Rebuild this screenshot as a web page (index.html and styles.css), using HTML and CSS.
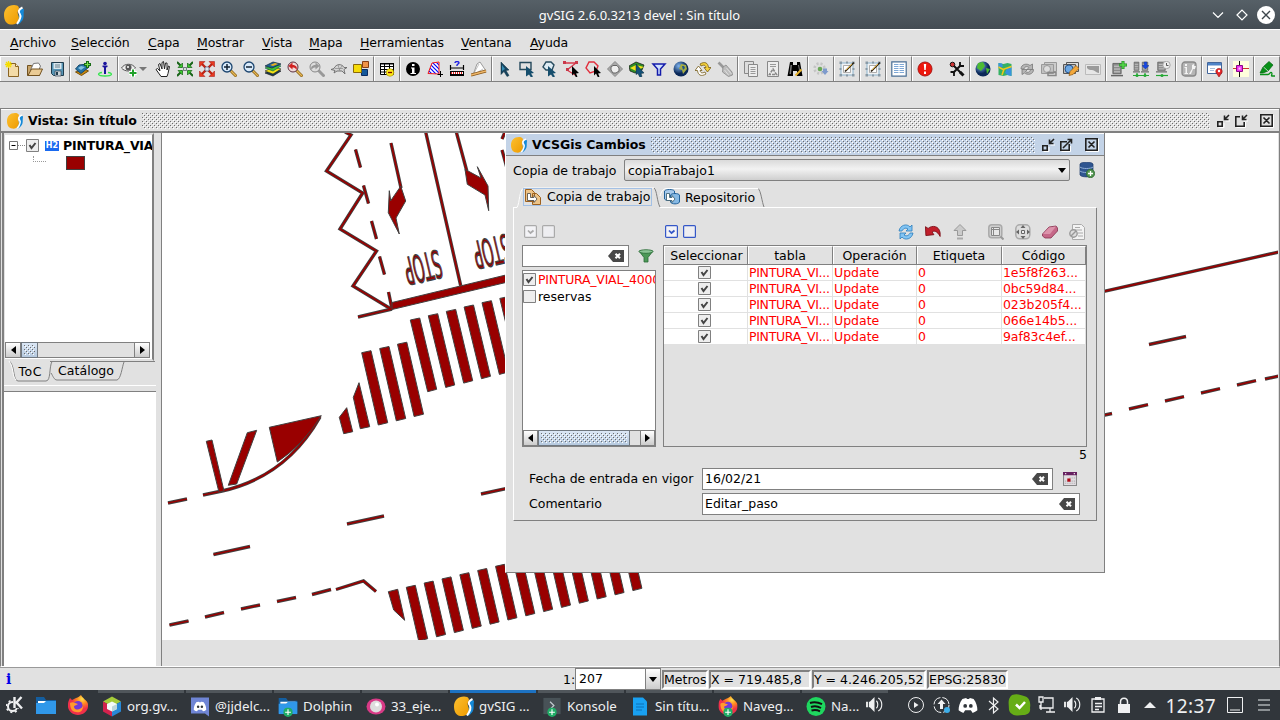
FILE: index.html
```html
<!DOCTYPE html>
<html lang="es">
<head>
<meta charset="utf-8">
<title>gvSIG 2.6.0.3213 devel : Sin título</title>
<link rel="stylesheet" href="styles.css">
</head>
<body>
<svg class="defs" width="0" height="0">
<defs>
<pattern id="dots" width="4" height="4" patternUnits="userSpaceOnUse"><path fill="#6c6c6c" d="M0 0h1v1H0zM2 2h1v1H2z"/><path fill="#fff" d="M1 1h1v1H1zM3 3h1v1H3z"/></pattern>
<pattern id="hatch" width="4" height="4" patternUnits="userSpaceOnUse"><path fill="#fff" d="M0 0h4v4H0z"/><path stroke="#00f" stroke-width="1.200" d="M-1-1l6 6M3-1l2 2M-1 3l2 2"/></pattern>
<linearGradient id="gold" x2="1" y2="1"><stop stop-color="#fcc030"/><stop offset="1" stop-color="#ee9b00"/></linearGradient>
<radialGradient id="globeg" cx=".35" cy=".3"><stop stop-color="#7fb4ee"/><stop offset="1" stop-color="#0b2858"/></radialGradient>
<radialGradient id="fox" cx=".7" cy=".2"><stop stop-color="#ffe14a"/><stop offset=".5" stop-color="#ff8a20"/><stop offset="1" stop-color="#f0304a"/></radialGradient>
<symbol id="logo" viewBox="0 0 20 20"><path fill="#1489d8" d="M16 4c2 0 4-1 4 1-1 5 1 8-3 12-2 2.500-4 3-4 1z"/><path fill="url(#gold)" d="M10 0c5 0 6 3 4 6-1.500 3 2 5 .5 9-1 4-5 5-8 4.500C2 19 0 15 0 10 0 4 4 0 10 0z"/><path fill="none" stroke="#fff" stroke-width="2" d="M18.500 2.500c-4 2-4.500 4-2.700 6.500s0 6-2.800 10"/></symbol>
<symbol id="new" viewBox="0 0 16 16"><path fill="#f3dba7" stroke="#8a6424" d="M3.500 2.500h7l3 3v10h-10z"/><path fill="#fff3cf" stroke="#8a6424" d="M10.500 2.500v3h3"/><path stroke="#f5dd00" stroke-width="1.300" d="M3.500 0v7M0 3.500h7M1 1l5 5M6 1L1 6"/></symbol>
<symbol id="open" viewBox="0 0 16 16"><path fill="#c7a46a" stroke="#725220" d="M.5 14.500v-10h4l1 2h7v8z"/><path fill="#fff" stroke="#777" d="M3.500 9l3-6.500 5-.5 2 3-2 5z"/><path fill="#eacb95" stroke="#725220" d="M1 14.500L4.500 8h11l-3 6.500z"/></symbol>
<symbol id="save" viewBox="0 0 16 16"><path fill="#5795b5" stroke="#203c4d" d="M2.500 1.500h12v13h-10l-2-2z"/><path fill="#d9e7ee" d="M4.500 2h8v6h-8z"/><path fill="#cfd8dc" stroke="#345" stroke-width=".7" d="M6 10h6v5H6z"/><path fill="#203c4d" d="M7 11h2v3H7z"/><path stroke="#68808c" d="M6 4h5M6 6h5"/></symbol>
<symbol id="addlayer" viewBox="0 0 16 16"><path fill="#c7850a" stroke="#76500a" d="M.5 11l9-3 4 2-7 4.500z"/><path fill="#2372a6" stroke="#1a4a6a" d="M.5 8L4 4l9-1 1 3-8 6.500z"/><path fill="#83c0df" d="M3 7l3-2 4 1-4 3z"/><path stroke="#186c16" stroke-width="3" d="M12.500 0v7M9 3.500h7"/><path stroke="#7be04d" d="M12.500 1v5M10 3.500h5"/></symbol>
<symbol id="person" viewBox="0 0 16 16"><path fill="none" stroke="#36e64f" stroke-width="1.400" d="M5 11.500c-5 .5-5 3.500 3 3.500s8-3 3-3.500"/><circle cx="8" cy="2.500" r="1.800" fill="#1a139c"/><path fill="#1a139c" d="M5.500 4.500h5V6l-1.500.5V13H7V6.500L5.500 6z"/></symbol>
<symbol id="eye" viewBox="0 0 16 16"><path fill="#eee" stroke="#555" d="M.5 7c3-5 11-5 14 0-3 4-11 4-14 0z"/><circle cx="7.500" cy="6.500" r="3" fill="#555"/><circle cx="7" cy="6" r="1" fill="#fff"/><path stroke="#fff" stroke-width="4" d="M12 8v8M8 12h8"/><path stroke="#21a12b" stroke-width="2" d="M12 8.500v7M8.500 12h7"/></symbol>
<symbol id="hand" viewBox="0 0 16 16"><path fill="#fff" stroke="#222" d="M5 14L1 8.500 2.500 7.500 5 10 3.500 3.500l1.500-1L7 8V1.500l1.500-1L9.500 8l1-6 1.500 0v7l1.500-4 1 .5-1.500 7-1 3H6z"/></symbol>
<symbol id="zin" viewBox="0 0 16 16"><path stroke="#91681c" stroke-width="3" d="M9 9l6.500 6.500"/><path stroke="#e7b955" stroke-width="1.200" d="M9 9l6 6"/><circle cx="6" cy="6" r="5" fill="#d9eafa" stroke="#1d4670" stroke-width="1.300"/><path stroke="#123" stroke-width="1.500" d="M6 3v6M3 6h6"/></symbol>
<symbol id="zout" viewBox="0 0 16 16"><path stroke="#91681c" stroke-width="3" d="M9 9l6.500 6.500"/><path stroke="#e7b955" stroke-width="1.200" d="M9 9l6 6"/><circle cx="6" cy="6" r="5" fill="#d9eafa" stroke="#1d4670" stroke-width="1.300"/><path stroke="#123" stroke-width="1.500" d="M3 6h6"/></symbol>
<symbol id="zprev" viewBox="0 0 16 16"><path stroke="#91681c" stroke-width="3" d="M9 9l6.500 6.500"/><path stroke="#e7b955" stroke-width="1.200" d="M9 9l6 6"/><circle cx="6" cy="6" r="5" fill="#f0d8d8" stroke="#5b3040"/><path fill="#d02020" d="M1.500 5l4-3.500V4c4 0 5 2.500 4 5-1-2-2-2.500-4-2.500v2z"/></symbol>
<symbol id="znext" viewBox="0 0 16 16"><path stroke="#999" stroke-width="3" d="M9 9l6.500 6.500"/><circle cx="6" cy="6" r="5" fill="#ddd" stroke="#888"/><path fill="#999" d="M10.500 5l-4-3.500V4c-4 0-5 2.500-4 5 1-2 2-2.500 4-2.500v2z"/></symbol>
<symbol id="arrin" viewBox="0 0 16 16"><path stroke="#176317" stroke-width="2" d="M0 1l5 5M16 1l-5 5M0 15l5-5M16 15l-5-5"/><path fill="#3ecc30" stroke="#176317" stroke-width=".7" d="M5.500 2v4.500H1zM10.500 2v4.500H15zM5.500 14V9.500H1zM10.500 14V9.500H15z"/><path fill="#ccebd0" stroke="#334" stroke-width=".6" d="M6.500 6.500h3v3h-3z"/></symbol>
<symbol id="arrout" viewBox="0 0 16 16"><path stroke="#c02414" stroke-width="2.400" d="M2 2l12 12M14 2L2 14"/><path fill="#e83a20" stroke="#a01010" stroke-width=".5" d="M.5.5H6L.5 6zM15.500.5H10L15.500 6zM.5 15.500H6L.5 10zM15.500 15.500H10l5.500-5.500z"/><path fill="#dde9f2" stroke="#446" stroke-width=".6" d="M6 6h4v4H6z"/></symbol>
<symbol id="layers" viewBox="0 0 16 16"><path fill="#193b55" stroke="#111" stroke-width=".6" d="M0 12l9-4 7 2-8 5z"/><path fill="#f2e216" stroke="#222" stroke-width=".6" d="M0 10l9-4 7 2-8 5z"/><path fill="#3fc037" stroke="#154" stroke-width=".6" d="M0 7l9-4 7 2-8 5z"/><path fill="#1c6196" stroke="#123" stroke-width=".7" d="M0 5l8-4 8 2-9 4z"/><path fill="#edb020" d="M5 4l5-2 3 1-5 2z"/></symbol>
<symbol id="turtle" viewBox="0 0 16 16"><path fill="#d4d4d4" stroke="#6a6a6a" stroke-width=".9" d="M0 8.500l3-1c2-5 8-5 10-1h3l-3 2 1 4.500-3-3H6l-3 2 1-2.500z"/><path fill="none" stroke="#888" stroke-width=".7" d="M4 7.500h8M7 4l2 6M11 5L8 9"/></symbol>
<symbol id="squares" viewBox="0 0 16 16"><path fill="#16599b" stroke="#0b2c62" d="M8.500 8.500h6v6h-6z"/><path fill="#f6dc09" stroke="#8a6909" d="M.5 3.500h8v8h-8z"/><path fill="#f09348" stroke="#863e14" d="M9.500.5h6v6h-6z"/></symbol>
<symbol id="table" viewBox="0 0 16 16"><path fill="#fff" stroke="#000" stroke-width="1" d="M1.500 2.500h13v11h-13zM1.500 5.500h13M1.500 8.500h13M1.500 11h13M5.500 3v10M10.500 3v10"/><path d="M1 2h14v1.500H1z"/><circle cx="11" cy="11.500" r="3.800" fill="#ffe819" stroke="#a18f00" stroke-width=".6"/><path stroke="#7d0900" stroke-width="1.300" d="M9 11.500h4"/></symbol>
<symbol id="info" viewBox="0 0 16 16"><circle cx="8" cy="8" r="7"/><path fill="#fff" d="M7 3h2.500v2H7zM6 6.500h3.500V12H11v1H5.500v-1H7V7.500H6z"/></symbol>
<symbol id="area" viewBox="0 0 16 16"><path fill="url(#hatch)" stroke="#f01b1b" d="M1 12.500L5 2l7-1v12z"/><path stroke="#000" d="M13.500 10v6M10.500 13.500h6"/></symbol>
<symbol id="ruler" viewBox="0 0 16 16"><path stroke="#000" stroke-width="1.200" d="M1.500 4v5M14.500 4v5M2 7h12"/><path d="M1 10h14v5H1z"/><path fill="#fff" d="M2 11h12v2H2z"/><path stroke="#e02020" stroke-width="2" stroke-dasharray="1" d="M2 12h12"/><path fill="none" stroke="#2020e0" stroke-width="1.400" d="M6 2c0-2 4-2 4 0L8 4v1"/></symbol>
<symbol id="fan" viewBox="0 0 16 16"><path fill="#fff" stroke="#777" stroke-width=".7" d="M2 14L6 3l3-2 6 9z"/><path stroke="#999" stroke-width=".6" d="M2 14L8 3M2 14l10-6"/><path stroke="#8a5719" stroke-width="3" d="M0 14l15-4"/><path stroke="#efb86b" stroke-width="1.600" d="M0 14l15-4"/></symbol>
<symbol id="cursor" viewBox="0 0 16 16"><path fill="#17435e" stroke="#0b3043" stroke-width=".5" d="M4 1l8 8-3 .5 3 5-2 1-3-5-3 3z"/><path fill="#358db5" d="M5 4l3 4-3 2z"/></symbol>
<symbol id="selrect" viewBox="0 0 16 16"><path fill="none" stroke="#25495c" stroke-width="1.400" d="M1 1.500h11v7H1z"/><path fill="#164e6d" d="M7 5l8 7-3 .5 2 3-2 1-2-3-3 2z"/></symbol>
<symbol id="selpoly" viewBox="0 0 16 16"><path fill="#ddebf3" stroke="#25495c" stroke-width="1.400" d="M5 1h5l3 3-2 5H5L2 6z"/><path fill="#164e6d" d="M7 5l8 7-3 .5 2 3-2 1-2-3-3 2z"/></symbol>
<symbol id="selline" viewBox="0 0 16 16"><path fill="none" stroke="#d8384a" stroke-width="1.300" d="M1 2h12L4 9l8 5"/><path fill="#c9394a" d="M0 0h3v3H0zM12 0h3v3h-3zM3 7h3v3H3z"/><path d="M9 5l7 7-3 .5 1.500 3-1.500 1-2-4-2 2z"/></symbol>
<symbol id="selcirc" viewBox="0 0 16 16"><path fill="none" stroke="#e12e3c" stroke-width="1.400" d="M4 1h5l4 4-2 5-6 2-4-5z"/><path d="M9 5l7 7-3 .5 1.500 3-1.500 1-2-4-2 2z"/></symbol>
<symbol id="buffer" viewBox="0 0 16 16"><path fill="#a9a9a9" stroke="#888" d="M8 .5l3 3 4.500 4.500-4.500 4.500-3 3-3-3L.5 8 5 3.500z"/><path fill="#eee" stroke="#666" d="M6 4.500h4L12 7v3l-3 2H6L4 9V6z"/></symbol>
<symbol id="sellayer" viewBox="0 0 16 16"><path fill="#2f8d27" stroke="#111" stroke-width=".7" d="M0 5l7-4 8 3-2 5-7 3-5-2z"/><path fill="#f0e31f" d="M1 7l6-3 8 2-8 4z"/><path fill="#145178" stroke="#092838" stroke-width=".5" d="M7 3l8 9-3 .5 1 3-2 1-2-4-2 1z"/></symbol>
<symbol id="filter" viewBox="0 0 16 16"><path fill="#cfe0ff" stroke="#141baa" stroke-width="1.500" d="M2 3h12L9.500 8v6h-3V8z"/></symbol>
<symbol id="globe" viewBox="0 0 16 16"><circle cx="8" cy="8" r="7.500" fill="url(#globeg)"/><path fill="#a6ad44" d="M8 3l5 1 1 4-4 5-1-4-3-1z"/><path fill="#21558a" d="M9 5l2 0 1 2-2 2z"/></symbol>
<symbol id="swap" viewBox="0 0 16 16"><g fill="#f4d13d" stroke="#755b17" stroke-width=".8"><path d="M5 3c5-3 8-1 8.500 3.500H16L12.500 11 9 6.500h2C10.500 4 9 3.500 6 5z"/><path fill="#fff" d="M11 13c-5 3-8 1-8.500-3.500H0L3.500 5 7 9.500H5C5.500 12 7 12.500 10 11z"/></g></symbol>
<symbol id="broom" viewBox="0 0 16 16"><path stroke="#999" stroke-width="2.600" d="M1.500 1.500l6 6"/><path fill="#bdbdbd" stroke="#888" stroke-width=".8" d="M6 6l3-2 6 7 .5 3-4 1.500-6-4.500z"/><path stroke="#ddd" d="M7.500 9l4 5M9.500 7l5 6"/></symbol>
<symbol id="copies" viewBox="0 0 16 16"><path fill="#ddd" stroke="#888" d="M1.500.5h9v12h-9z"/><path fill="#ededed" stroke="#888" d="M5.500 3.500h9v12h-9z"/><path stroke="#999" d="M7.500 6.500h5M7.500 8.500h5M7.500 10.500h5M7.500 12.500h5"/></symbol>
<symbol id="recycle" viewBox="0 0 16 16"><path fill="#ededed" stroke="#888" d="M2.500.5h11v15h-11z"/><path stroke="#999" fill="none" d="M5 3.500h6M5 5.500h6"/><path stroke="#888" stroke-width="1.600" stroke-dasharray="3 1" fill="none" d="M8 8l3.500 5.500h-7z"/></symbol>
<symbol id="binoc" viewBox="0 0 16 16"><path d="M3 1h3v3h4V1h3l2.500 14H10v-5H6v5H.5z"/><path fill="#777" d="M3.500 4H5l-1 9H2.500zM11 4h1l1 5h-1z"/><path stroke="#e8b42f" stroke-width="2" d="M8.500 14.500l6-6"/></symbol>
<symbol id="gear" viewBox="0 0 16 16"><circle cx="6.500" cy="7.500" r="5" fill="#ddd" stroke="#c4c4c4" stroke-width="2.500" stroke-dasharray="2"/><circle cx="7" cy="8" r="2.300" fill="#6aa858"/><path fill="#7e9bcc" d="M10 7.500h4v2.500h1.500L12 14 8.500 10H10z"/></symbol>
<symbol id="edit" viewBox="0 0 16 16"><path fill="#f2f2f2" stroke="#8bb4cf" d="M2 2h12v12H2z"/><path fill="#fff" stroke="#999" stroke-width=".8" d="M4.500 4.500h7v7h-7z"/><g fill="#8a9aa5"><path d="M.5.500h2.500v2.500H.5zM7 .5h2v2H7zM13 .5h2.500v2.500H13zM.5 7h2v2h-2zM13.500 7h2v2h-2zM.5 13h2.500v2.500H.5zM7 13.500h2v2H7zM13 13h2.500v2.500H13z"/></g><path stroke="#302719" stroke-width="1.700" d="M6 10.500l9-9"/><path stroke="#d9a633" stroke-width="1" d="M7 9l6-6"/></symbol>
<symbol id="list" viewBox="0 0 16 16"><path fill="#fff" stroke="#4a6f95" stroke-width="1.200" d="M.8.800h14.400v14.400H.8z"/><path stroke="#7fa8d6" d="M3 3.500h4.500M8.500 3.500H13M3 5.500h4.500M8.500 5.500H13M3 7.500h4.500M8.500 7.500H13M3 9.500h4.500M8.500 9.500H13M3 11.500h4.500M8.500 11.500H13"/></symbol>
<symbol id="alert" viewBox="0 0 16 16"><circle cx="8" cy="8" r="7" fill="#ed170d" stroke="#a91714"/><path fill="#fff" d="M6.800 3h2.400l-.5 6H7.300zM7 10.500h2v2.500H7z"/></symbol>
<symbol id="tools" viewBox="0 0 16 16"><path stroke="#111" stroke-width="2" d="M3 3l10 10M12 4L4 12"/><path fill="none" stroke="#111" stroke-width="1.800" d="M11 1v4h4M1.500 11H5v4"/><path stroke="#111" stroke-width="3" d="M11 11l3.500 3.500"/><circle cx="3.500" cy="3.500" r="2.300" fill="#c33" stroke="#111"/></symbol>
<symbol id="earth" viewBox="0 0 16 16"><circle cx="8" cy="8" r="7.500" fill="url(#globeg)"/><path fill="#4dbb33" d="M3 2l5-1 2 4-4 5-4-3zM11 7l4 1-3 5z"/></symbol>
<symbol id="map" viewBox="0 0 16 16"><path fill="#36b164" d="M1.500 2l5 1 4-1 4 1v12l-4-1-4 1-5-1z"/><path fill="#3794dc" d="M10 7l4.500-1v9l-4-1L8 12zM1.500 2l3.500.5 1 3-4.500 2z"/><path fill="none" stroke="#f3c81c" stroke-width="1.500" d="M1.500 6L6 8.500l8.500-3M7 8l-2 6"/></symbol>
<symbol id="sync" viewBox="0 0 16 16"><g fill="#b5b5b5" stroke="#777" stroke-width=".8"><path d="M2 8c0-5 6-6 9-3.500L13.500 3v5.500H8L10 6.500C8 5 5.500 5.500 5 8z"/><path d="M14.500 8.500c0 5-6 6-9 3.500L3 13.500V8.500h5.500L6.500 10.500c2 1.500 4.500 1 5-2z"/></g></symbol>
<symbol id="viewgray" viewBox="0 0 16 16"><path fill="#ccc" stroke="#999" d="M3.500 1.500h12v9h-12z"/><path fill="#c2c2c2" stroke="#999" d="M.5 3.500h12v9H.5z"/><circle cx="6" cy="8" r="3.500" fill="#ddd" stroke="#999"/><path fill="none" stroke="#888" stroke-width="1.500" d="M7 11.500h8v3H7z"/></symbol>
<symbol id="viewedit" viewBox="0 0 16 16"><path fill="#ddd" stroke="#555" d="M3.500 1.500h12v9h-12z"/><path fill="#bbb" stroke="#555" d="M.5 3.500h12v9H.5z"/><circle cx="6" cy="8" r="4" fill="#6ca8e5" stroke="#27568f"/><path fill="#f3a83b" stroke="#8e580f" stroke-width=".7" d="M6 14.500l1-4 6-6 3 3-6 6z"/></symbol>
<symbol id="image" viewBox="0 0 16 16"><path fill="#e6e6e6" stroke="#bbb" d="M.5 3.500h15v10H.5z"/><path fill="#9a9a9a" d="M2 5h12v7c-3 0-4-3-7-3-2 0-3 0-5-2z"/></symbol>
<symbol id="server" viewBox="0 0 16 16" preserveAspectRatio="none"><path fill="#8c8c8c" stroke="#5c5c5c" d="M2.500 1.500h11v11h-11z"/><path stroke="#d8d8d8" d="M4 4.500h8M4 7.500h8M4 10.500h8"/><path stroke="#666" stroke-width="1.600" d="M0 14.500h16"/></symbol>
<symbol id="plus" viewBox="0 0 8 8"><path stroke="#238722" stroke-width="3" d="M4 0v8M0 4h8"/><path stroke="#55d94a" stroke-width="1.500" d="M4 .5v7M.5 4h7"/></symbol>
<symbol id="downarr" viewBox="0 0 8 8"><path fill="#1646e8" stroke="#143a9c" stroke-width=".6" d="M2.500 0h3v4H8L4 8 0 4h2.500z"/></symbol>
<symbol id="infogray" viewBox="0 0 16 16"><rect x="1" y="1" width="14" height="14" rx="3" fill="#b5b5b5" stroke="#888" stroke-width="1.300"/><path fill="#f4f4f4" d="M4 3h2v2H4zM3.500 6H6v6h1v1H3.500v-1h1V7h-1zM8 13l3-5V4l2-1v2h2l-1 3h-2l-2 5z"/></symbol>
<symbol id="winpin" viewBox="0 0 16 16"><path fill="#fff" stroke="#44669a" d="M.5 1.500h14v11H.5z"/><path fill="#4e83c7" d="M1 2h13v2.500H1z"/><path stroke="#a8bfdc" d="M3 7.500h5M3 9.500h4"/><path fill="#e52629" stroke="#8f1010" stroke-width=".6" d="M12 16L9 11.500c-1.500-5.500 7.500-5.500 6 0z"/><circle cx="12" cy="10" r="1.200" fill="#fff"/></symbol>
<symbol id="snap" viewBox="0 0 16 16"><path fill="#ffffdc" d="M0 0h16v16H0z"/><path stroke="#111" d="M6.500 0v16"/><path stroke="#c33" d="M0 7.500h16"/><path fill="#ee32ed" stroke="#8c078b" d="M3.500 4.500h6v6h-6z"/><path fill="#ffc8ff" d="M5.500 6.500h2v2h-2z"/></symbol>
<symbol id="marker" viewBox="0 0 16 16"><path fill="#079017" stroke="#056010" stroke-width=".7" d="M1 12l3-6 6-5.500L14 4l-5 6-5 2z"/><path stroke="#e1e1e1" stroke-width=".8" d="M4.500 6l4.500 4"/><path fill="none" stroke="#079017" stroke-width="1.300" d="M1 13.500h8c2 0 2-3 3.500-2s-1 3.500.5 3.500h3"/></symbol>
<symbol id="min" viewBox="0 0 14 14"><path fill="none" stroke="#fff" d="M2.500 13.500h5.500V9M9.500 7H14"/><path fill="none" stroke="#222" stroke-width="1.600" d="M1.800 7.800h4.400v4.400H1.800zM13 1L8.500 5.500M8.500 1.500v4h4"/></symbol>
<symbol id="max" viewBox="0 0 14 14"><path fill="none" stroke="#fff" d="M2.500 13.500h9V8M10 7h4"/><path fill="none" stroke="#222" stroke-width="1.600" d="M6 2.800H1.800v9.400h8.400V8M13 1L8.500 5.500M8.500 1.500v4h4"/></symbol>
<symbol id="max2" viewBox="0 0 14 14"><path fill="none" stroke="#fff" d="M2.500 13.500h9V8"/><path fill="none" stroke="#222" stroke-width="1.600" d="M8 3.800H1.800v8.400h8.400V6M4 10l8-8M8.500 1.500h4v4"/></symbol>
<symbol id="close" viewBox="0 0 14 14"><path fill="none" stroke="#fff" d="M1 13.500h12.500V1"/><path fill="none" stroke="#222" stroke-width="1.600" d="M.8.800h11.400v11.400H.8zM3.500 3.500l6 6M9.500 3.500l-6 6"/></symbol>
<symbol id="check" viewBox="0 0 13 13"><path fill="#eee" stroke="#808080" d="M.5.5h12v12H.5z"/><path fill="none" stroke="#444" stroke-width="2" d="M3.500 6l2 3 4-5"/></symbol>
<symbol id="uncheck" viewBox="0 0 13 13"><path fill="#eee" stroke="#808080" d="M.5.5h12v12H.5z"/></symbol>
<symbol id="bchk" viewBox="0 0 13 13"><rect x=".6" y=".6" width="11.800" height="11.800" rx="1" fill="#f3f3f6" stroke="currentColor" stroke-width="1.200"/><path fill="none" stroke="currentColor" stroke-width="1.700" d="M4 5.500l2.500 2.500L9.500 5.500"/></symbol>
<symbol id="bunchk" viewBox="0 0 13 13"><rect x=".6" y=".6" width="11.800" height="11.800" rx="1" fill="#eeeef1" stroke="currentColor" stroke-width="1.200"/></symbol>
<symbol id="clear" viewBox="0 0 16 12"><path fill="#484848" d="M5 0h11v12H5L0 6z"/><path stroke="#fff" stroke-width="2" d="M7.500 3.700l4.500 4.600M12 3.700L7.500 8.300"/></symbol>
<symbol id="funnel" viewBox="0 0 16 14"><path fill="#4c9857" stroke="#286b35" stroke-width=".8" d="M1 2l5 6.500V13h4V8.500L15 2z"/><ellipse cx="8" cy="2.500" rx="7" ry="1.800" fill="#8cc596" stroke="#286b35" stroke-width=".8"/></symbol>
<symbol id="db" viewBox="0 0 16 16"><path fill="#2f5590" stroke="#183768" stroke-width=".7" d="M1 2c1-2.500 12-2.500 13 0v11c-1 2.500-12 2.500-13 0z"/><path fill="none" stroke="#91afd5" d="M1 5c2 2 11 2 13 0M1 9c2 2 11 2 13 0"/><circle cx="11.500" cy="11.500" r="4.200" fill="#4f934d" stroke="#2d662e" stroke-width=".7"/><path stroke="#fff" stroke-width="1.300" d="M11.500 9v5M9 11.500h5"/></symbol>
<symbol id="wcopy" viewBox="0 0 16 16"><path fill="#eec488" stroke="#9c601e" d="M.5.5h6l3 3v9h-9zM7.500 4.500h4l4 4v7h-8z"/><path fill="#fff" stroke="#444" stroke-width=".8" d="M2.500 4.500h3v4H9v-2l3 3.500-3 3.500v-2H2.500z"/></symbol>
<symbol id="repo" viewBox="0 0 16 16"><path fill="#a8cbec" stroke="#23629a" d="M.5 2c1-2 9-2 10 0v8c-1 2-9 2-10 0z"/><path fill="#86b9e4" stroke="#23629a" d="M6.500 6c1-2 8-2 9 0v7c-1 2.500-8 2.500-9 0z"/><path fill="#fff" stroke="#356" stroke-width=".8" d="M2.500 4.500h3v4H8v-2l3 3.500-3 3.500v-2H2.500z"/></symbol>
<symbol id="refresh" viewBox="0 0 16 16"><path fill="#82c4f3" stroke="#2b7ebd" stroke-width=".8" d="M1 7c1-6 8-8 11-4l2-2v6H8l2-2C7 3 5 5 4 7zM15 9c-1 6-8 8-11 4l-2 2V9h6l-2 2c3 2 5 0 6-2z"/></symbol>
<symbol id="undo" viewBox="0 0 18 14"><path fill="#c11f2b" stroke="#7c0f18" d="M.5 1l3 2C8-1 16 0 17 8v4c-3-6-7-7-9-5l2 3-9 1z"/></symbol>
<symbol id="up" viewBox="0 0 16 16"><path fill="#cacaca" stroke="#999" d="M8 .5l6 6h-3.500v5h-5v-5H2z"/><path stroke="#aaa" stroke-width="2" d="M5 14.500h6"/></symbol>
<symbol id="zsel" viewBox="0 0 16 16"><rect x=".8" y=".8" width="13" height="13" rx="3" fill="#cfcfcf" stroke="#aaa" stroke-width="1.500"/><path fill="#e8e8e8" stroke="#888" d="M3.500 3.500h8v8h-8zM3.500 5.500h8M5.500 3.500v8"/><path stroke="#999" stroke-width="2" d="M12.500 12.500l3 3"/></symbol>
<symbol id="zcen" viewBox="0 0 16 16"><rect x=".8" y=".8" width="14" height="14" rx="4" fill="#ddd" stroke="#aaa" stroke-width="1.500"/><path fill="#666" d="M8 1l2.500 3h-5zM8 15l2.500-3h-5zM1 8l3-2.500v5zM15 8l-3-2.500v5z"/><path fill="#eee" stroke="#666" d="M6.500 6.500h3v3h-3z"/></symbol>
<symbol id="eraser" viewBox="0 0 16 16"><path fill="#c56788" stroke="#85304d" stroke-width=".8" d="M.5 10L7 3l7-1 1.500 2v3L9 14H3L.5 12z"/><path fill="#dc93ab" d="M1 10l6-6.500 7-1-6 7.500z"/></symbol>
<symbol id="docno" viewBox="0 0 16 16"><path fill="#f3f3f3" stroke="#aaa" d="M3.500.5h9l3 3v12h-12z"/><path stroke="#aaa" d="M6 3.500h5M6 6h7M9 9h5M9 12h5"/><circle cx="4.500" cy="9.500" r="3.700" fill="#ddd" stroke="#999" stroke-width="1.400"/><path stroke="#999" stroke-width="1.400" d="M2 12l5-5"/></symbol>
<symbol id="cal" viewBox="0 0 13 13"><path fill="#e2dde2" stroke="#888" d="M.5.5h12v12H.5z"/><path fill="#672160" d="M0 0h13v3H0z"/><path stroke="#fff" stroke-dasharray="1 7" d="M2 1.500h10"/><path stroke="#aaa" stroke-dasharray="1" d="M6 5.500h6M2 8.500h9M2 10.500h9"/><path fill="#b10714" d="M4 6h3v3H4z"/></symbol>
<symbol id="folder" viewBox="0 0 20 18"><path fill="#145e9f" d="M0 1h8l2 3h10v13H0z"/><path fill="#fff" d="M2 5h16v2H2z"/><path fill="#3098e9" d="M0 7h8l2-2h10v13H0z"/></symbol>
<symbol id="badge" viewBox="0 0 10 10"><circle cx="5" cy="5" r="5" fill="#20ad66"/><path stroke="#fff" stroke-width="1.200" d="M5 2v6M2 5h6"/></symbol>
<symbol id="firefox" viewBox="0 0 20 20"><path fill="url(#fox)" d="M13 0c1 3 6 5 7 9 1 6-4 11-10 11S-1 15 0 9c0-2 1-4 2-6l2 2 4-2c2-.5 4-2 5-3z"/><circle cx="10" cy="10.500" r="4.500" fill="#7239d8"/><path fill="#ff9a2e" d="M2 8c3-2 5 0 8 1-2 2-4 1-4 3 1 4 7 3 9-1 0 6-4 7-7 6-4 0-6-4-6-9z"/></symbol>
<symbol id="vol" viewBox="0 0 18 16"><path fill="#eff0f1" d="M0 5h2v6H0zM3 5h1l5-5v16l-5-5H3z"/><path fill="none" stroke="#eff0f1" stroke-width="1.200" d="M11 4c2 2 2 6 0 8M13 1c5 3 5 11 0 14"/></symbol>
<symbol id="discord" viewBox="0 0 20 16"><path fill="#fff" d="M4 1l4-1 1 1h2l1-1 4 1c3 4 4 8 4 12-2 2-4 2-5 3l-2-3H7l-2 3c-1-1-3-1-5-3C0 9 1 5 4 1z"/><circle cx="7" cy="8.500" r="2" fill="#31363b"/><circle cx="13" cy="8.500" r="2" fill="#31363b"/></symbol>
</defs>
</svg>

<header class="titlebar">
  <svg class="tb-logo"><use href="#logo"/></svg>
  <div class="tb-title">gvSIG 2.6.0.3213 devel : Sin título</div>
  <svg class="tb-ctl" viewBox="0 0 66 20"><path fill="none" stroke="#fff" stroke-width="1.200" d="M2 7.500l5 5 5-5M26 10l5-5 5 5-5 5z"/><circle cx="55" cy="10" r="9" fill="#fff"/><path stroke="#3d464c" stroke-width="1.400" d="M51 6l8 8M59 6l-8 8"/></svg>
</header>

<nav class="menubar">
  <span style="width:61px"><u>A</u>rchivo</span><span style="width:77px"><u>S</u>elección</span><span style="width:49px"><u>C</u>apa</span><span style="width:65px"><u>M</u>ostrar</span><span style="width:47px"><u>V</u>ista</span><span style="width:51px"><u>M</u>apa</span><span style="width:101px"><u>H</u>erramientas</span><span style="width:69px"><u>V</u>entana</span><span><u>A</u>yuda</span>
</nav>

<div class="toolbar">
  <div class="grp"><svg><use href="#new"/></svg><svg><use href="#open"/></svg><svg><use href="#save"/></svg></div>
  <div class="grp"><svg><use href="#addlayer"/></svg><svg><use href="#person"/></svg></div>
  <div class="grp eyegrp"><svg><use href="#eye"/></svg><i class="drop"></i><svg><use href="#hand"/></svg><svg><use href="#arrin"/></svg><svg><use href="#arrout"/></svg><svg><use href="#zin"/></svg><svg><use href="#zout"/></svg><svg><use href="#layers"/></svg><svg><use href="#zprev"/></svg><svg><use href="#znext"/></svg><svg><use href="#turtle"/></svg><svg><use href="#squares"/></svg></div>
  <div class="grp"><svg><use href="#table"/></svg></div>
  <div class="grp"><svg><use href="#info"/></svg><svg><use href="#area"/></svg><svg><use href="#ruler"/></svg><svg><use href="#fan"/></svg></div>
  <div class="grp"><svg><use href="#cursor"/></svg><svg><use href="#selrect"/></svg><svg><use href="#selpoly"/></svg><svg><use href="#selline"/></svg><svg><use href="#selcirc"/></svg><svg><use href="#buffer"/></svg><svg><use href="#sellayer"/></svg><svg><use href="#filter"/></svg><svg><use href="#globe"/></svg><svg><use href="#swap"/></svg><svg><use href="#broom"/></svg></div>
  <div class="grp"><svg><use href="#copies"/></svg><svg><use href="#recycle"/></svg><svg><use href="#binoc"/></svg></div>
  <div class="grp"><svg><use href="#gear"/></svg></div>
  <div class="grp"><svg><use href="#edit"/></svg></div>
  <div class="grp"><svg><use href="#edit"/></svg></div>
  <div class="grp"><svg><use href="#list"/></svg></div>
  <div class="grp alertgrp"><svg><use href="#alert"/></svg><svg><use href="#tools"/></svg></div>
  <div class="grp"><svg><use href="#earth"/></svg><svg><use href="#map"/></svg><svg><use href="#sync"/></svg><svg><use href="#viewgray"/></svg><svg><use href="#viewedit"/></svg><svg><use href="#image"/></svg></div>
  <div class="grp">
    <svg viewBox="0 0 16 16"><use href="#server" y="1" width="12" height="15"/><use href="#plus" x="8" width="8" height="8"/></svg>
    <svg viewBox="0 0 16 16"><use href="#server" x="0" width="7" height="12"/><use href="#server" x="8" width="8" height="12"/><use href="#downarr" x="9" width="7" height="9"/><path stroke="#25a935" stroke-width="1.200" d="M0 14.500h16M4 12v2M12 12v2"/><circle cx="4" cy="14.500" r="1.500" fill="#25a935"/><circle cx="12" cy="14.500" r="1.500" fill="#25a935"/></svg>
    <svg viewBox="0 0 16 16"><use href="#server" x="1" width="11" height="12"/><circle cx="11.500" cy="4" r="3.700" fill="#eee" stroke="#999" stroke-width=".8"/><path fill="none" stroke="#333" stroke-width=".8" d="M11.500 2v2.500h2"/><path stroke="#25a935" stroke-width="1.200" d="M1 14.500h12"/><circle cx="7" cy="14.500" r="1.500" fill="#25a935"/></svg>
  </div>
  <div class="grp"><svg><use href="#infogray"/></svg></div>
  <div class="grp"><svg><use href="#winpin"/></svg></div>
  <div class="grp"><svg><use href="#snap"/></svg></div>
  <div class="grp"><svg><use href="#marker"/></svg></div>
</div>
<div class="gap"></div>

<main class="desktop">
  <section class="vista">
    <div class="ititle">
      <svg class="ilogo"><use href="#logo"/></svg><b>Vista: Sin título</b>
      <svg class="idots"><rect width="100%" height="100%" fill="url(#dots)"/></svg>
      <svg class="ibtn"><use href="#min"/></svg><svg class="ibtn"><use href="#max"/></svg><svg class="ibtn last"><use href="#close"/></svg>
    </div>
    <div class="vbody">
      <aside class="left">
        <div class="toc">
          <div class="layer"><svg class="tree" viewBox="0 0 17 13"><path stroke="#888" stroke-dasharray="1" d="M9 6.500h8"/><path fill="#fff" stroke="#777" d="M.5 2.500h8v8h-8z"/><path stroke="#000" d="M2.500 6.500h4"/></svg><svg class="cb"><use href="#check"/></svg><em class="h2">H2</em><b>PINTURA_VIA</b></div>
          <div class="symbolrow"><i class="branch"></i><i class="swatch"></i></div>
          <div class="hscroll"><i class="sb"><i class="al"></i></i><svg class="thumb"><rect width="100%" height="100%" fill="url(#dots)"/></svg><i class="track"></i><i class="sb"><i class="ar"></i></i></div>
        </div>
        <div class="tabs-bottom"><svg viewBox="0 0 152 24"><path fill="#e1e1e1" stroke="#808080" d="M46 .5H151M6 .5c5 6 3 19 8 19.500h28c5 0 3-14 6-19.500"/><path fill="none" stroke="#808080" d="M47 12c2 3 3 7 6 7h60c4-1 5-13 7-18"/><path fill="none" stroke="#fff" d="M5 0c5 6 3 16 7 19"/><text x="14.500" y="14.500" textLength="23">ToC</text><text x="54" y="13.500" textLength="56">Catálogo</text></svg></div>
        <div class="lower"></div>
      </aside>
      <div class="split"></div>
      <div class="mapwrap">
        <svg class="map" viewBox="162 133 1116 507">
          <defs>
            <path id="s1" d="M361.700 352.700l9.300-2 16.700 72-9.400 2.300z"/>
            <path id="s2" d="M410.300 320l9.400-2 17 71.300-9 2.400z"/>
            <path id="s3" d="M406.300 587.300l9-2 12.400 53.400-9 2.300z"/>
            <g id="lines" fill="none">
              <path d="M345 132l6 3-24.500 36 36.200 22L340 229l36.500 22L353 286l38 23"/>
              <path d="M355.500 149.500l5 18M363.500 185.500l5 18M371.500 221l5 18M379.500 256.500l5 18M388.500 292l3.500 17M391 143l10 45M425.700 132l35 153.700M456.300 132l10.500 39M502 150l5 18M505 132l-3 7"/>
              <path d="M358 317l34-8M1104 291.300L1279 252M168 503l19-4M213.500 554.500l36.500-8M347 524l37-8M481 494l30-6.500M1149 344.500l37-8"/>
              <path d="M169.500 625l19-4M205 617l19-4.500M241 609l19-4M277 601.500l19-4M312 594.500l19-5M336 589.500l27.500-8.500 12.500 10.500"/>
              <path d="M1100 416l12-2.500M1129 409l19-4.300M1165 401l19-4.300M1201 393l19-4.300M1237 385l19-4.300M1265 379l14-3"/>
              <path d="M203 495l19-4c36-8 72-28 98-74"/>
            </g>
          </defs>
          <rect x="162" y="133" width="1116" height="507" fill="#fff"/>
          <use href="#lines" stroke="#404040" stroke-width="3.400"/><use href="#lines" stroke="#900" stroke-width="1.700"/>
          <g fill="#900" stroke="#404040">
            <path d="M392 302.500L510 274v7.500l-118 28zM400.700 186l5 15-9.700 17 3.300 16-11-21.300 1-22 1.400 10 8.300-12zM465 169.300l16 8.700-3.700-11.300L488 186l.7 24.700L485 195l-17.700-10.700zM339.300 417.300l7.400-9.600 6 24-9 2zM353.300 397.300l5.700-14.600 10.700 44-9.400 2zM206.300 441.300l5.700-1.300 12 51-5 1.300zM247.300 432.700l9.400-2.400-20 53.700-8.400 1.300zM269.300 427.300l52-11.600Q303 445 277.300 462zM388.300 591.700l9.400-2.400 7 31-11-10.300z"/>
            <use href="#s1"/><use href="#s1" x="18" y="-4.200"/><use href="#s1" x="35.800" y="-8.500"/>
            <use href="#s2"/><use href="#s2" x="18" y="-4.300"/><use href="#s2" x="36" y="-8.600"/><use href="#s2" x="53.800" y="-13"/><use href="#s2" x="71.700" y="-17.300"/><use href="#s2" x="89.500" y="-21.600"/>
            <use href="#s3"/><use href="#s3" x="17.850" y="-4.200"/><use href="#s3" x="35.700" y="-8.400"/><use href="#s3" x="53.550" y="-12.600"/><use href="#s3" x="71.400" y="-16.800"/><use href="#s3" x="89.250" y="-21"/><use href="#s3" x="107.100" y="-25.200"/><use href="#s3" x="124.950" y="-29.400"/><use href="#s3" x="142.800" y="-33.600"/><use href="#s3" x="160.650" y="-37.800"/><use href="#s3" x="178.500" y="-42"/><use href="#s3" x="196.350" y="-46.200"/><use href="#s3" x="214.200" y="-50.400"/>
            <text class="stop" transform="translate(438 250) rotate(167) scale(.37 1)">STOP</text>
            <text class="stop" transform="translate(507 234) rotate(167) scale(.37 1)">STOP</text>
          </g>
        </svg>
      </div>
    </div>
  </section>

  <section class="dialog">
    <div class="ititle">
      <svg class="ilogo"><use href="#logo"/></svg><b>VCSGis Cambios</b>
      <svg class="idots"><rect width="100%" height="100%" fill="url(#dots)"/></svg>
      <svg class="ibtn"><use href="#min"/></svg><svg class="ibtn"><use href="#max2"/></svg><svg class="ibtn last"><use href="#close"/></svg>
    </div>
    <div class="copyrow"><label>Copia de trabajo</label><div class="combo"><span>copiaTrabajo1</span><i></i></div><svg><use href="#db"/></svg></div>
    <div class="dtabs">
      <svg class="tabshape" viewBox="0 0 584 21"><path fill="none" stroke="#fff" d="M0 20.500h4c3-5 2-18 7-19.500h130M147 20.500H583"/><path fill="none" stroke="#808080" d="M141 1c3 2 3 14 6 19M245 1.500c3 2 4 14 6 18.500"/><path fill="none" stroke="#fff" d="M147 9c1-4 3-7 6-7.500h92"/><rect x="10.500" y="1.500" width="128" height="17" fill="none" stroke="#a3c0e4"/></svg>
      <div class="dtab one"><svg><use href="#wcopy"/></svg><span>Copia de trabajo</span></div>
      <div class="dtab two"><svg><use href="#repo"/></svg><span>Repositorio</span></div>
    </div>
    <div class="pane">
      <div class="cols">
        <div class="c1">
          <div class="checks gray"><svg><use href="#bchk"/></svg><svg><use href="#bunchk"/></svg></div>
          <div class="search"><div class="field"><svg class="clr"><use href="#clear"/></svg></div><svg class="fun"><use href="#funnel"/></svg></div>
          <div class="list">
            <div class="li red"><svg><use href="#check"/></svg><span>PINTURA_VIAL_4000</span></div>
            <div class="li"><svg><use href="#uncheck"/></svg><span>reservas</span></div>
            <div class="hscroll"><i class="sb"><i class="al"></i></i><svg class="thumb"><rect width="100%" height="100%" fill="url(#dots)"/></svg><i class="track"></i><i class="sb"><i class="ar"></i></i></div>
          </div>
        </div>
        <div class="c2">
          <div class="checks blue"><svg><use href="#bchk"/></svg><svg><use href="#bunchk"/></svg>
            <div class="acts"><svg><use href="#refresh"/></svg><svg><use href="#undo"/></svg><svg class="wide"><use href="#up"/></svg><svg><use href="#zsel"/></svg><svg><use href="#zcen"/></svg><svg><use href="#eraser"/></svg><svg><use href="#docno"/></svg></div>
          </div>
          <div class="table">
            <div class="tr th"><span>Seleccionar</span><span>tabla</span><span>Operación</span><span>Etiqueta</span><span>Código</span></div>
            <div class="tr"><span><svg><use href="#check"/></svg></span><span>PINTURA_VI...</span><span>Update</span><span>0</span><span>1e5f8f263...</span></div>
            <div class="tr"><span><svg><use href="#check"/></svg></span><span>PINTURA_VI...</span><span>Update</span><span>0</span><span>0bc59d84...</span></div>
            <div class="tr"><span><svg><use href="#check"/></svg></span><span>PINTURA_VI...</span><span>Update</span><span>0</span><span>023b205f4...</span></div>
            <div class="tr"><span><svg><use href="#check"/></svg></span><span>PINTURA_VI...</span><span>Update</span><span>0</span><span>066e14b5...</span></div>
            <div class="tr"><span><svg><use href="#check"/></svg></span><span>PINTURA_VI...</span><span>Update</span><span>0</span><span>9af83c4ef...</span></div>
          </div>
          <div class="count">5</div>
        </div>
      </div>
      <div class="frow"><label>Fecha de entrada en vigor</label><div class="field date"><span>16/02/21</span><svg class="clr"><use href="#clear"/></svg></div><svg class="cal"><use href="#cal"/></svg></div>
      <div class="frow"><label>Comentario</label><div class="field com"><span>Editar_paso</span><svg class="clr"><use href="#clear"/></svg></div></div>
    </div>
  </section>
</main>

<footer class="status">
  <strong>i</strong><span class="one">1:</span><div class="scale">207</div><div class="sdrop"><i></i></div>
  <div class="cell" style="width:46px">Metros</div><div class="cell" style="width:102px">X = 719.485,8</div><div class="cell" style="width:114px">Y = 4.246.205,52</div><div class="cell" style="width:81px">EPSG:25830</div>
</footer>

<div class="taskbar">
  <div class="launch">
    <svg viewBox="0 0 18 18"><circle cx="6.500" cy="10.500" r="4.500" fill="none" stroke="#eff0f1" stroke-width="2"/><circle cx="6.500" cy="10.500" r="6" fill="none" stroke="#eff0f1" stroke-width="1.600" stroke-dasharray="2 2.700"/><path fill="#31363b" d="M7 0h11v12H7z"/><path fill="none" stroke="#eff0f1" stroke-width="2.400" d="M8.500 1v11M15.500 1l-5 5.500 5.500 6"/></svg>
    <svg class="big"><use href="#folder"/></svg><svg class="big"><use href="#firefox"/></svg>
  </div>
  <div class="tasks">
    <div class="task"><svg viewBox="0 0 20 20"><path fill="#a5cc3a" d="M10 0l9 5-9 5-9-5z"/><path fill="#d3224d" d="M1 5l9 5v10l-9-5z"/><path fill="#2789d8" d="M19 5l-9 5v10l9-5z"/><path fill="#f4fafa" d="M10 5l5 2.500v5L10 15l-5-2.500v-5z"/><path fill="#bdd6dc" d="M10 10l5-2.500v5L10 15z"/></svg><span>org.gv...</span></div>
    <div class="task"><svg viewBox="0 0 20 20"><path fill="#6f85d5" d="M1 1h18v19l-4-3H1z"/><use href="#discord" x="3" y="5" width="14" height="10"/></svg><span>@jjdelc...</span></div>
    <div class="task"><svg viewBox="0 0 20 22"><use href="#folder" y="1" width="20" height="18"/><use href="#badge" x="5" y="12" width="10" height="10"/></svg><span>Dolphin</span></div>
    <div class="task"><svg viewBox="0 0 20 20"><ellipse cx="10" cy="10" rx="9.500" ry="8" fill="#d83a86"/><circle cx="10" cy="10" r="6" fill="#ddd"/><circle cx="11" cy="8" r="2" fill="#fff"/></svg><span>33_eje...</span></div>
    <div class="task active"><svg><use href="#logo"/></svg><span>gvSIG ...</span></div>
    <div class="task"><svg viewBox="0 0 20 22"><path fill="#485257" d="M1 2h18v17H1z"/><path fill="none" stroke="#c2cbd0" stroke-width="1.300" d="M8 6l4 4-4 4"/><use href="#badge" x="5" y="12" width="10" height="10"/></svg><span>Konsole</span></div>
    <div class="task"><svg viewBox="0 0 20 20"><path fill="#19a1f2" d="M3 1h10l4 4v14H3z"/><path stroke="#0c70b8" d="M6 7.500h8M6 10.500h8M6 13.500h6"/></svg><span>Sin títu...</span></div>
    <div class="task"><svg viewBox="0 0 20 22"><use href="#firefox" width="20" height="20"/><use href="#badge" x="5" y="12" width="10" height="10"/></svg><span>Naveg...</span></div>
    <div class="task spot"><svg viewBox="0 0 20 20"><circle cx="10" cy="10" r="9.500" fill="#1fd75f"/><path fill="none" stroke="#111" stroke-width="2" d="M4 6.500c4-1.200 8-.8 12 1.200M5 10.500c3-1 7-.7 10 1M5.500 14c3-.8 6-.5 8.500.8"/></svg><span>Na...</span></div>
  </div>
  <svg class="tray" viewBox="864 690 416 30">
    <use href="#vol" x="866" y="697" width="17" height="15"/>
    <circle cx="916" cy="705" r="7.500" fill="none" stroke="#eff0f1"/><path fill="#eff0f1" d="M914 702l4.500 3-4.500 3z"/>
    <circle cx="941.500" cy="705" r="7.500" fill="none" stroke="#eff0f1" stroke-dasharray="10 2"/><path fill="#eff0f1" d="M941.500 699.500l4 4.500h-2.500v5h-3v-5h-2.500z"/><circle cx="947" cy="710" r="3" fill="#3daee9"/>
    <use href="#discord" x="958" y="698" width="20" height="15"/>
    <path fill="none" stroke="#eff0f1" stroke-width="1.200" d="M989 701l9 8-4.500 4v-15l4.500 4-9 8"/>
    <path fill="#66ad16" d="M1012 695c5-2 9 0 12 1 5 1 7 6 6 12 1 5-3 7-7 7-6 1-12 1-14-5 0-5-2-11 3-15z"/><path fill="none" stroke="#fff" stroke-width="2.500" d="M1016 704.500l3.500 3.500 5.500-6"/>
    <path fill="none" stroke="#eff0f1" stroke-width="1.300" d="M1044 698h9v10h-13v-3M1046 712h9M1050 708v4M1039 697h4v5h-4zM1041 702v8"/>
    <use href="#vol" x="1064" y="697" width="17" height="15"/>
    <path fill="none" stroke="#eff0f1" stroke-width="1.300" d="M1092 699h12v13h-12zM1095 703.500h7M1095 706.500h7M1095 709.500h4"/><path fill="#eff0f1" d="M1095 697h6v3h-6z"/>
    <path fill="#eff0f1" d="M1118 704h12v9h-12z"/><path fill="none" stroke="#eff0f1" stroke-width="1.500" d="M1120.500 704v-2c0-5 7-5 7 0v2"/>
    <path fill="#eff0f1" d="M1144 708l6-6 6 6z"/>
    <text x="1165.500" y="712.500" textLength="50">12:37</text>
    <path fill="none" stroke="#eff0f1" d="M1227.500 697.500h15v15h-15zM1230 710h10"/>
    <path stroke="#8c9194" stroke-width="2" d="M1258 700h12M1258 705h12M1258 710h12"/>
  </svg>
</div>
</body>
</html>
```
FILE: styles.css
```css
* { box-sizing: border-box; }
body { margin: 0; width: 1280px; height: 720px; overflow: hidden; display: flex; flex-direction: column; background: #e1e1e1; color: #000; font: 12.5px "DejaVu Sans", sans-serif; }
svg { display: block; flex: none; }
.defs { position: absolute; }
i { font-style: normal; }

.titlebar { height: 29px; flex: none; display: flex; align-items: center; background: linear-gradient(#566067, #444c53); color: #fcfcfc; font: 13px "Noto Sans", sans-serif; padding: 0 3px 0 4px; }
.tb-logo { width: 20px; height: 20px; }
.tb-title { flex: 1; text-align: center; padding-left: 44px; }
.tb-ctl { width: 66px; height: 20px; }

.menubar { height: 27px; flex: none; display: flex; align-items: center; padding-left: 10px; border-top: 1px solid #fff; border-bottom: 1px solid #888; letter-spacing: -.1px; }
.menubar span { flex: none; white-space: nowrap; }
.menubar u { text-underline-offset: 2px; text-decoration-thickness: 1px; }

.toolbar { height: 26px; flex: none; display: flex; border-bottom: 1px solid #808080; }
.grp { display: flex; align-items: center; padding: 0 1px; border-left: 1px solid #fff; border-right: 1px solid #808080; border-top: 1px solid #fff; flex: none; }
.grp:first-child { width: 70px; }
.grp svg { width: 16px; height: 16px; margin: 0 3px; }
.eyegrp { padding-left: 0; width: 256px; }
.eyegrp svg:first-child { margin: 0 2px; }
.drop { border: 4px solid transparent; border-top-color: #777; border-bottom: 0; margin-right: 5px; }
.alertgrp { gap: 10px; width: 58px; }
.gap { height: 27px; flex: none; border-bottom: 1px solid #808080; }

.desktop { height: 558px; flex: none; position: relative; border-left: 1px solid #808080; border-right: 1px solid #808080; border-bottom: 1px solid #fff; }
.vista { height: 557px; display: flex; flex-direction: column; }
.ititle { height: 24px; flex: none; display: flex; align-items: center; border-top: 1px solid #fff; border-bottom: 2px solid #808080; padding: 0 5px 0 6px; }
.ilogo { width: 16px; height: 16px; margin-right: 5px; }
.ititle b { white-space: nowrap; letter-spacing: -.04px; }
.idots { flex: 1 1 0; min-width: 0; height: 16px; margin: 0 6px 0 5px; }
.ibtn { width: 14px; height: 14px; margin-right: 4px; }
.ibtn.last { margin: 0 0 0 8px; }
.vbody { flex: 1; display: flex; min-height: 0; }
.left { width: 154px; margin-left: 1px; flex: none; display: flex; flex-direction: column; border-left: 2px solid #808080; }
.toc { height: 228px; flex: none; background: #fff; border: 2px solid #e1e1e1; border-left-width: 1px; border-right: 2px solid #808080; display: flex; flex-direction: column; padding: 2px 2px 1px 1px; width: 150px; overflow: hidden; }
.layer { display: flex; align-items: center; height: 17px; padding-left: 3px; white-space: nowrap; }
.layer b { letter-spacing: -.2px; }
.tree { width: 17px; height: 13px; }
.cb { width: 13px; height: 13px; margin-right: 6px; }
.h2 { width: 14px; height: 10px; background: #1a6af0; color: #fff; font: bold 8px/10px "DejaVu Sans", sans-serif; text-align: center; margin-right: 4px; flex: none; }
.symbolrow { display: flex; height: 19px; padding: 2px 0 0 27px; gap: 20px; }
.branch { width: 13px; height: 6px; border-left: 1px dotted #999; border-bottom: 1px dotted #999; }
.swatch { width: 19px; height: 14px; background: #900; border: 1px solid #404040; }
.hscroll { height: 16px; display: flex; margin-top: auto; flex: none; }
.toc .hscroll { margin-left: -1px; }
.sb { width: 16px; border: 1px solid #808080; background: linear-gradient(#fff, #ccc); display: flex; align-items: center; justify-content: center; flex: none; }
.al { border: 4px solid transparent; border-right: 5px solid #000; border-left: 0; }
.ar { border: 4px solid transparent; border-left: 5px solid #000; border-right: 0; }
.thumb { width: 17px; height: 16px; background: linear-gradient(#dbe7f5, #b5c9df); border: 1px solid #707880; padding: 2px; }
.track { flex: 1; border: solid #808080; border-width: 1px 0; background: #e1e1e1; }
.tabs-bottom { height: 24px; flex: none; }
.tabs-bottom svg { width: 152px; height: 24px; }
.tabs-bottom text { font: 12.5px "DejaVu Sans", sans-serif; fill: #000; }
.lower { flex: 1; background: #fff; border-top: 1px solid #808080; box-shadow: 0 -5px #e1e1e1, 0 -6px #fff; margin-top: 6px; }
.split { width: 5px; flex: none; background: #e1e1e1; }
.mapwrap { flex: 1; border-left: 1px solid #808080; }
.map { width: 1116px; height: 507px; }
.stop { font: 38px "DejaVu Sans", sans-serif; stroke-width: 1.5px; }

.dialog { position: absolute; left: 504px; top: 24px; width: 600px; height: 440px; background: #e1e1e1; border: 1px solid #808080; border-width: 0 1px 1px 0; border-left: 1px solid #fff; display: flex; flex-direction: column; }
.dialog .ititle { height: 23px; background: #c3d3e7; border-bottom-width: 1px; padding: 0 5px; }
.copyrow { display: flex; align-items: center; height: 22px; margin-top: 3px; padding-left: 7px; }
.copyrow label { width: 111px; }
.combo { width: 446px; height: 22px; display: flex; align-items: center; justify-content: space-between; padding: 0 3px; border: 1px solid #808080; border-radius: 2px; background: linear-gradient(#dadada, #f2f2f2 45%, #cfcfcf); }
.combo i, .sdrop i { border: 4px solid transparent; border-top: 5px solid #000; border-bottom: 0; }
.copyrow svg { width: 16px; height: 16px; margin-left: 9px; }
.dtabs { height: 21px; margin: 6px 0 0 7px; display: flex; position: relative; flex: none; }
.tabshape { position: absolute; left: 0; top: 0; width: 584px; height: 21px; }
.dtab { display: flex; align-items: center; white-space: nowrap; padding-left: 12px; height: 19px; gap: 6px; }
.dtab svg { width: 16px; height: 16px; }
.dtab.one { width: 139px; }
.dtab.two { padding-top: 1px; gap: 5px; }
.pane { margin-left: 7px; margin-right: 8px; width: 584px; height: 313px; border: 1px solid #808080; border-left-color: #fff; border-top: 0; padding: 15px 9px 0 8px; }
.cols { display: flex; gap: 7px; height: 245px; }
.c1 { width: 134px; display: flex; flex-direction: column; }
.c2 { width: 424px; display: flex; flex-direction: column; }
.checks { display: flex; gap: 5px; height: 22px; padding: 2px 0 0 2px; }
.checks > svg { width: 13px; height: 13px; }
.gray { color: #aaa; }
.blue { color: #3457c7; }
.acts { display: flex; margin-left: auto; padding-right: 2px; gap: 11px; margin-top: -1px; }
.acts svg { width: 16px; height: 16px; }
.acts .wide { margin-right: 9px; }
.field { height: 22px; background: #fff; border: 1px solid #808080; display: flex; align-items: center; padding: 0 4px 0 2px; }
.clr { width: 16px; height: 12px; margin-left: auto; }
.search { display: flex; align-items: center; gap: 9px; }
.search .field { width: 107px; }
.fun { width: 16px; height: 14px; }
.list { height: 177px; margin-top: 3px; background: #fff; border: 1px solid #808080; display: flex; flex-direction: column; overflow: hidden; }
.li { display: flex; align-items: center; height: 17px; gap: 2px; white-space: nowrap; }
.li.red { letter-spacing: -.25px; }
.li svg, .tr svg { width: 13px; height: 13px; }
.red { color: #f00; }
.list .thumb { width: 92px; }
.list .sb { width: 15px; }
.table { height: 202px; border: 1px solid #808080; }
.tr { display: flex; height: 16px; color: #f00; background: #fff; }
.tr span { width: 85px; border-right: 1px solid #e1e1e1; border-bottom: 1px solid #e1e1e1; overflow: hidden; white-space: nowrap; padding-left: 1px; line-height: 15px; flex: none; }
.tr span:first-child { width: 84px; display: flex; justify-content: center; align-items: center; padding: 0 2px 0 0; }
.tr span:nth-child(2) { letter-spacing: -.3px; }
.tr span:nth-child(3), .tr span:nth-child(5) { width: 84px; }
.tr span:nth-child(5) { letter-spacing: -.1px; }
.th { height: 19px; background: #e1e1e1; color: #000; }
.tr.th span { border-color: #808080; border-top: 1px solid #fff; text-align: center; line-height: 18px; padding: 0; box-shadow: inset 1px 0 #fff; letter-spacing: 0; }
.tr.th span:first-child { padding-left: 2px; }
.count { text-align: right; line-height: 16px; }
.frow { display: flex; align-items: center; margin-bottom: 3px; }
.frow label { width: 180px; padding-left: 7px; white-space: nowrap; }
.frow span, .frow label { transform: translateY(-1px); }
.date { width: 351px; }
.com { width: 378px; }
.cal { width: 14px; height: 14px; margin-left: 10px; }

.status { height: 23px; flex: none; display: flex; align-items: center; border-top: 1px solid #999; box-shadow: 0 -1px #fff; white-space: nowrap; padding-left: 6px; }
.status strong { font: bold 14px "DejaVu Serif", serif; color: #0000e8; width: 557px; }
.status .one { width: 12px; }
.scale { width: 71px; height: 22px; line-height: 20px; background: #fff; border: 1px solid #808080; padding-left: 3px; }
.sdrop { width: 15px; height: 22px; display: flex; align-items: center; justify-content: center; border: 1px solid #808080; border-left: 0; background: linear-gradient(#fff, #ccc); margin-right: 1px; }
.cell { height: 19px; line-height: 15px; border: 2px solid #808080; border-right-color: #fff; border-bottom-color: #fff; margin-right: 1px; }

.taskbar { height: 30px; flex: none; display: flex; background: #31363b; color: #eff0f1; font: 13.3px "Noto Sans", sans-serif; }
.launch { width: 98px; display: flex; align-items: center; padding-left: 6px; gap: 12px; }
.launch svg { width: 18px; height: 18px; }
.launch .big { width: 20px; height: 20px; }
.tasks { display: flex; gap: 2px; width: 790px; flex: none; }
.task { width: 86px; display: flex; align-items: center; gap: 5px; padding-left: 4px; border-top: 3px solid #50565b; white-space: nowrap; }
.task svg { width: 20px; height: 21px; }
.task span { transform: translateY(-1px); }
.task.active { border-color: #1d72c2; }
.tray { width: 416px; height: 30px; margin-left: -24px; }
.tray text { font: 19px "Noto Sans", sans-serif; fill: #eff0f1; }
```
